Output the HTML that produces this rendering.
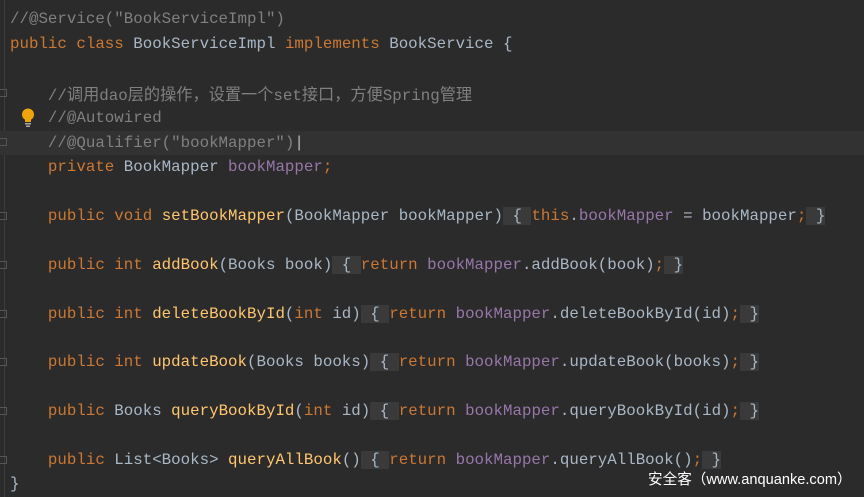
<!DOCTYPE html>
<html><head><meta charset="utf-8"><style>
body{margin:0;background:#2b2b2b;width:864px;height:497px;overflow:hidden;position:relative;font-family:"Liberation Mono","Noto Sans CJK SC",monospace;font-size:15.8px;color:#a9b7c6}
.l{position:absolute;left:10px;height:24px;line-height:24px;white-space:pre}
.k{color:#cc7832}.c{color:#808080}.p{color:#9876aa}.m{color:#ffc66d}
.f{background:#3a3a3a;color:#a9b7c6}
.hl{position:absolute;left:0;width:864px;height:24px;background:#323232}
.g{position:absolute;left:0;width:7px;height:8px;border:1px solid #555;border-left:none;box-sizing:border-box}
.cj{font-family:"Noto Sans CJK SC",sans-serif;font-size:16.2px}
</style></head><body>
<div style="position:absolute;left:4px;top:0;width:1px;height:497px;background:#3c3c3c"></div>
<div class="hl" style="top:131px"></div>
<div class="l c" style="top:7px">//@Service("BookServiceImpl")</div>
<div class="l" style="top:32px"><span class="k">public class </span>BookServiceImpl <span class="k">implements </span>BookService {</div>
<div class="l c" style="top:81px">    //<span class="cj">调用</span>dao<span class="cj">层的操作，设置一个</span>set<span class="cj">接口，方便</span>Spring<span class="cj">管理</span></div>
<div class="l c" style="top:106px">    //@Autowired</div>
<div class="l c" style="top:131px">    //@Qualifier("bookMapper")<span style="color:#bbb">|</span></div>
<div class="l" style="top:155px">    <span class="k">private </span>BookMapper <span class="p">bookMapper</span><span class="k">;</span></div>
<div class="l" style="top:204px">    <span class="k">public void </span><span class="m">setBookMapper</span>(BookMapper bookMapper)<span class="f"> { </span><span class="k">this</span>.<span class="p">bookMapper</span> = bookMapper<span class="k">;</span><span class="f"> }</span></div>
<div class="l" style="top:253px">    <span class="k">public int </span><span class="m">addBook</span>(Books book)<span class="f"> { </span><span class="k">return </span><span class="p">bookMapper</span>.addBook(book)<span class="k">;</span><span class="f"> }</span></div>
<div class="l" style="top:302px">    <span class="k">public int </span><span class="m">deleteBookById</span>(<span class="k">int </span>id)<span class="f"> { </span><span class="k">return </span><span class="p">bookMapper</span>.deleteBookById(id)<span class="k">;</span><span class="f"> }</span></div>
<div class="l" style="top:350px">    <span class="k">public int </span><span class="m">updateBook</span>(Books books)<span class="f"> { </span><span class="k">return </span><span class="p">bookMapper</span>.updateBook(books)<span class="k">;</span><span class="f"> }</span></div>
<div class="l" style="top:399px">    <span class="k">public </span>Books <span class="m">queryBookById</span>(<span class="k">int </span>id)<span class="f"> { </span><span class="k">return </span><span class="p">bookMapper</span>.queryBookById(id)<span class="k">;</span><span class="f"> }</span></div>
<div class="l" style="top:448px">    <span class="k">public </span>List&lt;Books&gt; <span class="m">queryAllBook</span>()<span class="f"> { </span><span class="k">return </span><span class="p">bookMapper</span>.queryAllBook()<span class="k">;</span><span class="f"> }</span></div>
<div class="l" style="top:472px">}</div>
<div class="g" style="top:89px"></div><div class="g" style="top:138px"></div>
<div class="g" style="top:212px"></div><div class="g" style="top:261px"></div><div class="g" style="top:310px"></div><div class="g" style="top:358px"></div><div class="g" style="top:407px"></div><div class="g" style="top:456px"></div>
<svg style="position:absolute;left:21px;top:108px" width="14" height="20"><circle cx="7" cy="6.5" r="6" fill="#f0a30a"/><rect x="4" y="11" width="6" height="3" fill="#f0a30a"/><rect x="4" y="15" width="6" height="1.5" fill="#aaa"/><rect x="5" y="17.5" width="4" height="1.5" fill="#aaa"/></svg>
<div style="position:absolute;left:648px;top:468px;font-family:'Liberation Sans','Noto Sans CJK SC',sans-serif;font-size:14.6px;color:#fff">安全客（www.anquanke.com）</div>
</body></html>
